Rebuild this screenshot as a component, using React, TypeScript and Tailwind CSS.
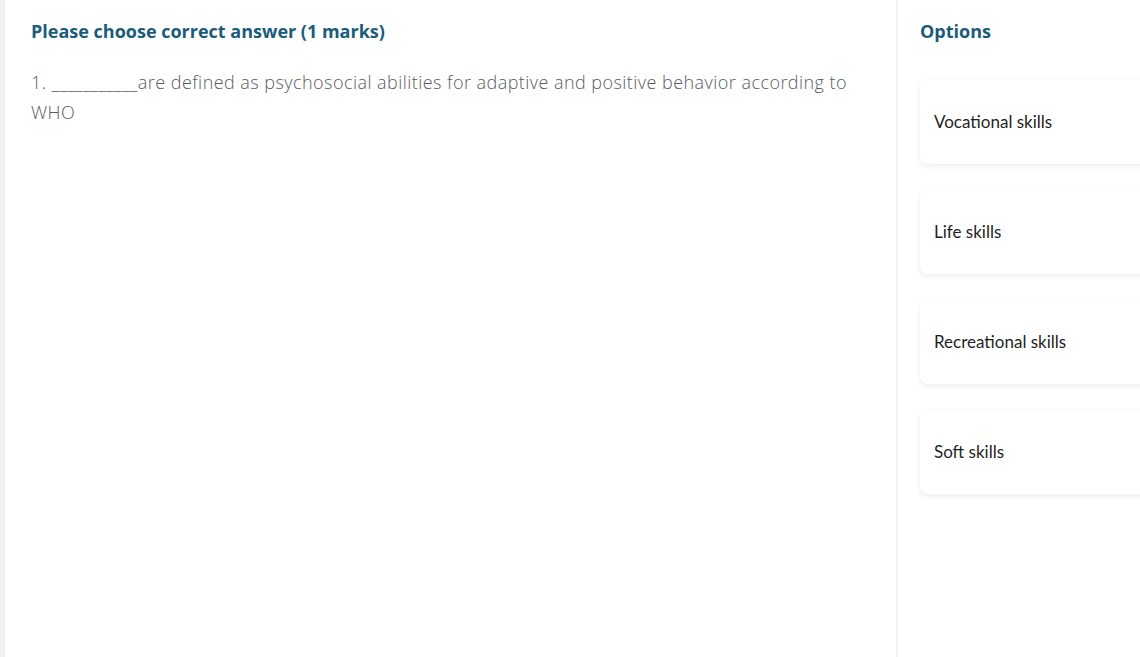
import React from 'react';

interface Option {
  id: string;
  label: string;
}

const options: Option[] = [
  { id: 'a', label: 'Vocational skills' },
  { id: 'b', label: 'Life skills' },
  { id: 'c', label: 'Recreational skills' },
  { id: 'd', label: 'Soft skills' },
];

export default function App() {
  return (
    <div className="flex h-[657px] w-[1140px] overflow-hidden bg-white font-['Open_Sans',sans-serif]">
      <div className="w-[5px] shrink-0 bg-[#f1f2f4]" />

      {/* question */}
      <div className="w-[891px] shrink-0 pl-[26px] pr-[30px] pt-[18px]">
        <h2 className="text-[18px] font-bold leading-[26px] text-[#1b5b7b]">
          Please choose correct answer (1 marks)
        </h2>
        <p className="mt-[23px] text-[18px] font-light leading-[30px] tracking-[0.45px] text-[#585c62]">
          1. ___________are defined as psychosocial abilities for adaptive and positive behavior according to WHO
        </p>
      </div>

      <div className="w-[2px] shrink-0 bg-[#f3f3f4]" />

      {/* options */}
      <div className="flex-1 pl-[22px] pt-[18px]">
        <h3 className="text-[18px] font-bold leading-[26px] text-[#1b5b7b]">Options</h3>
        <div className="mt-[36px] flex w-[280px] flex-col gap-[26px]">
          {options.map((opt) => (
            <div
              key={opt.id}
              className="flex h-[84px] items-center rounded-lg bg-white pl-[14px] shadow-[0_2px_6px_rgba(0,0,0,0.08)]"
            >
              <span className="font-['Lato',sans-serif] text-[17px] text-[#1f1f1f]">{opt.label}</span>
            </div>
          ))}
        </div>
      </div>
    </div>
  );
}
